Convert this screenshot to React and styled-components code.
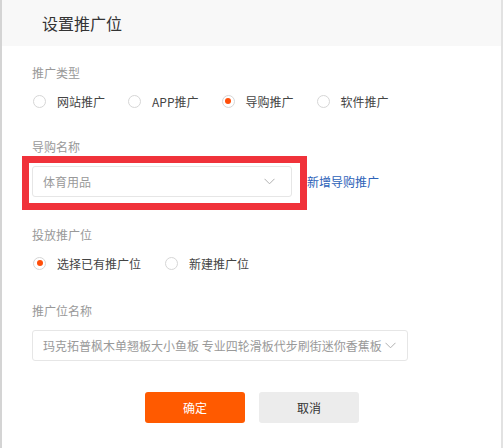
import React, { useState } from 'react'
import styled, { createGlobalStyle } from 'styled-components'

const GlobalStyle = createGlobalStyle`
  html, body {
    margin: 0;
    padding: 0;
    background: #fff;
  }
  body {
    font-family: "Noto Sans CJK SC", "Liberation Sans", sans-serif;
  }
`

const Frame = styled.div`
  box-sizing: border-box;
  width: 503px;
  height: 448px;
  border-left: 2px solid #d4d4d4;
  border-right: 2px solid #e2e2e2;
  background: #fff;
  overflow: hidden;
`

const Header = styled.div`
  height: 46px;
  background: #f8f8f8;
  display: flex;
  align-items: center;
  padding-left: 40px;
  font-size: 16px;
  color: #333;
`

const Body = styled.div`
  padding-left: 30px;
`

const Label = styled.div`
  margin-top: ${props => props.top}px;
  height: 16px;
  line-height: 16px;
  font-size: 12px;
  color: #999;
`

const RadioRow = styled.div`
  display: flex;
  align-items: center;
  gap: ${props => props.gap}px;
  margin-top: 12px;
  height: 16px;
`

const Option = styled.label`
  display: flex;
  align-items: center;
  gap: 11px;
  font-size: 12px;
  color: #444;
  cursor: pointer;
`

const Circle = styled.span`
  box-sizing: border-box;
  width: 13px;
  height: 13px;
  border-radius: 50%;
  border: 1px solid #d6d6d6;
  display: flex;
  align-items: center;
  justify-content: center;
  margin-left: 1px;

  &::after {
    content: '';
    width: 6px;
    height: 6px;
    border-radius: 50%;
    background: ${props => (props.checked ? '#ff4e0a' : 'transparent')};
  }
`

const SelectLine = styled.div`
  display: flex;
  align-items: center;
  margin-top: 11px;
`

const Highlight = styled.div`
  position: relative;

  &::after {
    content: '';
    position: absolute;
    top: -10px;
    left: -10px;
    right: -15px;
    bottom: -13px;
    border: 7px solid #f0323a;
    pointer-events: none;
  }
`

const Select = styled.div`
  box-sizing: border-box;
  width: ${props => props.width}px;
  height: 31px;
  border: 1px solid #e6e6e6;
  border-radius: 3px;
  display: flex;
  align-items: center;
  padding: 0 8px 0 10px;
  font-size: 12px;
  color: #999;
  white-space: nowrap;
`

const SelectText = styled.span`
  flex: ${props => (props.fill ? 1 : 'none')};
  overflow: hidden;
`

const Chevron = styled.svg`
  flex: none;
  margin-left: ${props => (props.fill ? 0 : 3)}px;
  margin-right: ${props => props.gap}px;
`

const Link = styled.a`
  font-size: 12px;
  color: #2d62b8;
  margin-left: 15px;
  text-decoration: none;
`

const Buttons = styled.div`
  display: flex;
  gap: 14px;
  margin-top: 31px;
  padding-left: 113px;
`

const Button = styled.button`
  width: 100px;
  height: 31px;
  border: none;
  border-radius: 3px;
  font-family: inherit;
  font-size: 12px;
  background: ${props => (props.primary ? '#ff5a00' : '#ececec')};
  color: ${props => (props.primary ? '#fff' : '#333')};
  cursor: pointer;
`

const ChevronIcon = ({ gap }) => (
  <Chevron gap={gap} width="11" height="7" viewBox="0 0 11 7">
    <path d="M0.5 0.8 L5.5 5.8 L10.5 0.8" fill="none" stroke="#b0b0b0" strokeWidth="1" />
  </Chevron>
)

const RadioGroup = ({ options, value, onChange, gap }) => (
  <RadioRow gap={gap}>
    {options.map(o => (
      <Option key={o} onClick={() => onChange(o)}>
        <Circle checked={value === o} />
        {o}
      </Option>
    ))}
  </RadioRow>
)

const App = () => {
  const [type, setType] = useState('导购推广')
  const [slot, setSlot] = useState('选择已有推广位')

  return (
    <Frame>
      <GlobalStyle />
      <Header>设置推广位</Header>
      <Body>
        <Label top={19}>推广类型</Label>
        <RadioGroup
          options={['网站推广', 'APP推广', '导购推广', '软件推广']}
          value={type}
          onChange={setType}
          gap={22}
        />

        <Label top={30}>导购名称</Label>
        <SelectLine>
          <Highlight>
            <Select width={260}>
              <SelectText fill>体育用品</SelectText>
              <ChevronIcon gap={8} />
            </Select>
          </Highlight>
          <Link href="#">新增导购推广</Link>
        </SelectLine>

        <Label top={30}>投放推广位</Label>
        <RadioGroup
          options={['选择已有推广位', '新建推广位']}
          value={slot}
          onChange={setSlot}
          gap={23}
        />

        <Label top={32}>推广位名称</Label>
        <SelectLine>
          <Select width={376}>
            <SelectText>玛克拓普枫木单翘板大小鱼板 专业四轮滑板代步刷街迷你香蕉板</SelectText>
            <ChevronIcon gap={0} />
          </Select>
        </SelectLine>

        <Buttons>
          <Button primary>确定</Button>
          <Button>取消</Button>
        </Buttons>
      </Body>
    </Frame>
  )
}

export default App
